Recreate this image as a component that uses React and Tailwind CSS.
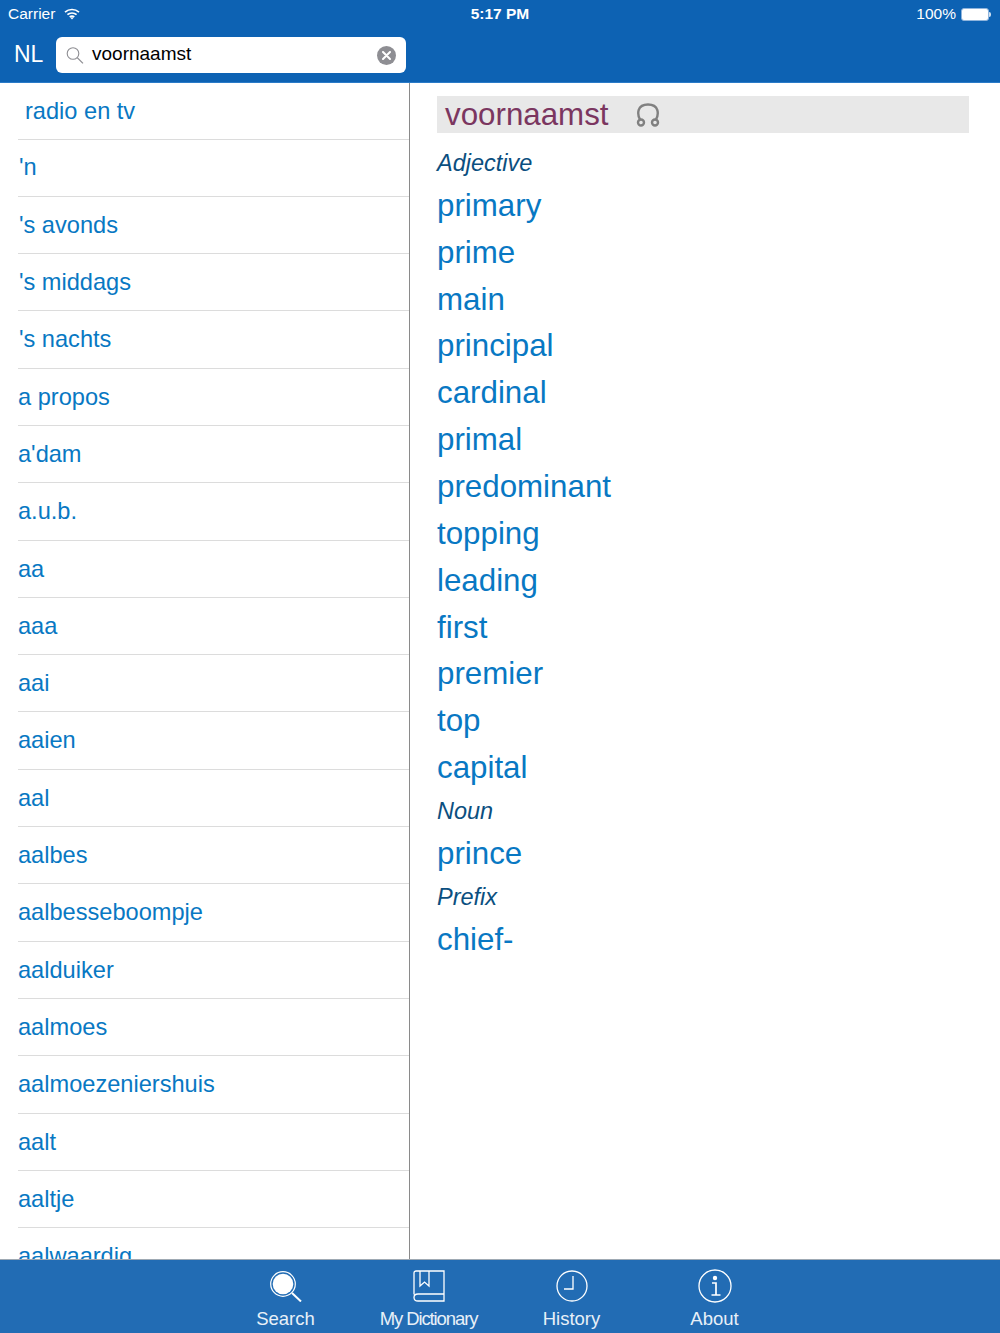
const words = [
  "radio en tv",
  "'n",
  "'s avonds",
  "'s middags",
  "'s nachts",
  "a propos",
  "a'dam",
  "a.u.b.",
  "aa",
  "aaa",
  "aai",
  "aaien",
  "aal",
  "aalbes",
  "aalbesseboompje",
  "aalduiker",
  "aalmoes",
  "aalmoezeniershuis",
  "aalt",
  "aaltje",
  "aalwaardig",
];

const sections = [
  {
    label: "Adjective",
    items: ["primary", "prime", "main", "principal", "cardinal", "primal", "predominant", "topping", "leading", "first", "premier", "top", "capital"],
  },
  { label: "Noun", items: ["prince"] },
  { label: "Prefix", items: ["chief-"] },
];

function WifiIcon() {
  return (
    <svg width="16" height="12" viewBox="0 0 16 12" fill="none" stroke="white" strokeWidth="1.7">
      <path d="M1 4.2C5 .6 11 .6 15 4.2" />
      <path d="M3.4 6.7C6 4.4 10 4.4 12.6 6.7" />
      <path d="M5.7 9C7 7.9 9 7.9 10.3 9" />
      <path d="M8 11.6L6.4 9.8C7.3 9 8.7 9 9.6 9.8Z" fill="white" stroke="none" />
    </svg>
  );
}

function StatusBar() {
  return (
    <div className="relative flex h-[28px] items-center justify-between pl-2 pr-[9px] text-[15.5px] text-white">
      <div className="flex items-center gap-[9px]">
        <span>Carrier</span>
        <WifiIcon />
      </div>
      <span className="absolute left-0 right-0 text-center text-[15.5px] font-bold">5:17 PM</span>
      <div className="flex items-center gap-[5px]">
        <span>100%</span>
        <div className="flex items-center">
          <div className="h-[13px] w-[28px] rounded-[3px] border border-[#8fb4dc] bg-white" />
          <div className="h-[5px] w-[2px] rounded-r-sm bg-[#cfe0f1]" />
        </div>
      </div>
    </div>
  );
}

function SearchBar() {
  return (
    <div className="flex h-[54px] items-start">
      <span className="mt-[10px] w-[56px] pl-[14px] text-[23px] leading-[33px] text-white">NL</span>
      <div className="mt-[9px] flex h-[36px] w-[350px] items-center rounded-[6px] bg-white pl-[10px] pr-[10px]">
        <svg width="18" height="17" viewBox="0 0 18 17" fill="none" stroke="#8e8e93" strokeWidth="1.1">
          <circle cx="7" cy="6.5" r="5.8" />
          <path d="M11.2 10.6L17 16.4" strokeWidth="1.3" />
        </svg>
        <span className="ml-[8px] flex-1 pb-[1px] text-[19px] text-black">voornaamst</span>
        <div className="flex h-[19px] w-[19px] items-center justify-center rounded-full bg-[#8e8e93]">
          <svg width="9" height="9" viewBox="0 0 9 9" stroke="white" strokeWidth="2" strokeLinecap="round">
            <path d="M1 1L8 8M8 1L1 8" />
          </svg>
        </div>
      </div>
    </div>
  );
}

function WordList() {
  return (
    <div className="h-full w-[410px] shrink-0 overflow-hidden border-r border-[#8a8a8a]">
      {words.map((word, i) => (
        <div
          key={word}
          className={
            "ml-[18px] flex items-center border-b border-[#dcdcdc] pt-[1px] text-[23.6px] text-[#0878c3] " +
            (i === 0 ? "h-[56.5px] pl-[7px]" : i < 5 ? "h-[57.3px] pl-px" : "h-[57.3px]")
          }
        >
          {word}
        </div>
      ))}
    </div>
  );
}

function Entry() {
  return (
    <div className="flex-1 overflow-hidden pl-[27px] pr-[31px] pt-[13px]">
      <div className="flex h-[37px] items-center bg-[#e8e8e8] pl-[8px]">
        <span className="pt-[1px] text-[31.3px] leading-none text-[#7b3660]">voornaamst</span>
        <svg width="24" height="24" viewBox="0 0 24 24" fill="none" stroke="#808080" strokeWidth="2.4" className="ml-[27px]">
          <path d="M4 16.5C1 11 1 1.5 12 1.5S23 11 20 16.5" />
          <circle cx="5" cy="19.5" r="3" />
          <circle cx="19" cy="19.5" r="3" />
        </svg>
      </div>
      <div className="pt-[11px]">
        {sections.map((section) => (
          <div key={section.label}>
            <div className="flex h-[39px] items-center text-[23.5px] italic text-[#0b4f80]">{section.label}</div>
            {section.items.map((item) => (
              <div key={item} className="flex h-[46.85px] items-center text-[31.3px] text-[#0878c3]">
                {item}
              </div>
            ))}
          </div>
        ))}
      </div>
    </div>
  );
}

function TabItem({ label, tight, children }) {
  return (
    <div className="flex w-[143px] flex-col items-center">
      <div className="flex h-[36px] items-center justify-center">{children}</div>
      <span className={"mt-[4px] whitespace-nowrap text-[18.5px] leading-[21px] text-[#e8f0f8] " + (tight ? "tracking-[-1.1px]" : "")}>
        {label}
      </span>
    </div>
  );
}

function TabBar() {
  return (
    <div className="flex h-[74px] shrink-0 justify-center border-t border-[#9fa9b3] bg-[#226cb4] pt-[8px]">
      <TabItem label="Search">
        <svg width="32" height="31" viewBox="0 0 32 31" fill="none" stroke="white">
          <circle cx="13" cy="13" r="12.3" strokeWidth="1.2" />
          <circle cx="13" cy="13" r="10.3" fill="white" stroke="none" />
          <path d="M22 22L31 30.5" strokeWidth="2" />
        </svg>
      </TabItem>
      <TabItem label="My Dictionary" tight>
        <svg width="32" height="32" viewBox="0 0 32 32" fill="none" stroke="white" strokeWidth="1.3">
          <path d="M1 24.5V3C1 1.5 2 1 3 1H31V31H5C2.5 31 1 30 1 27.5C1 25 2.5 24 5 24H31" />
          <path d="M7 1V16L11.5 12L16 16V1" />
        </svg>
      </TabItem>
      <TabItem label="History">
        <svg width="32" height="32" viewBox="0 0 32 32" fill="none" stroke="white" strokeWidth="1.3">
          <circle cx="16" cy="16" r="15" />
          <path d="M17 6V19H8" />
        </svg>
      </TabItem>
      <TabItem label="About">
        <svg width="34" height="34" viewBox="0 0 34 34" fill="none" stroke="white" strokeWidth="1.3">
          <circle cx="17" cy="17" r="16" />
          <circle cx="17" cy="9" r="2.2" fill="white" stroke="none" />
          <path d="M14 14H18V25.5M13.5 26H22.5" strokeWidth="1.7" />
        </svg>
      </TabItem>
    </div>
  );
}

export default function App() {
  return (
    <div className="flex h-[1333px] w-[1000px] flex-col overflow-hidden bg-white font-['Liberation_Sans',Arial,sans-serif]">
      <div className="h-[83px] shrink-0 border-b border-[#2a7bc8] bg-[#0d62b3]">
        <StatusBar />
        <SearchBar />
      </div>
      <div className="flex min-h-0 flex-1">
        <WordList />
        <Entry />
      </div>
      <TabBar />
    </div>
  );
}
